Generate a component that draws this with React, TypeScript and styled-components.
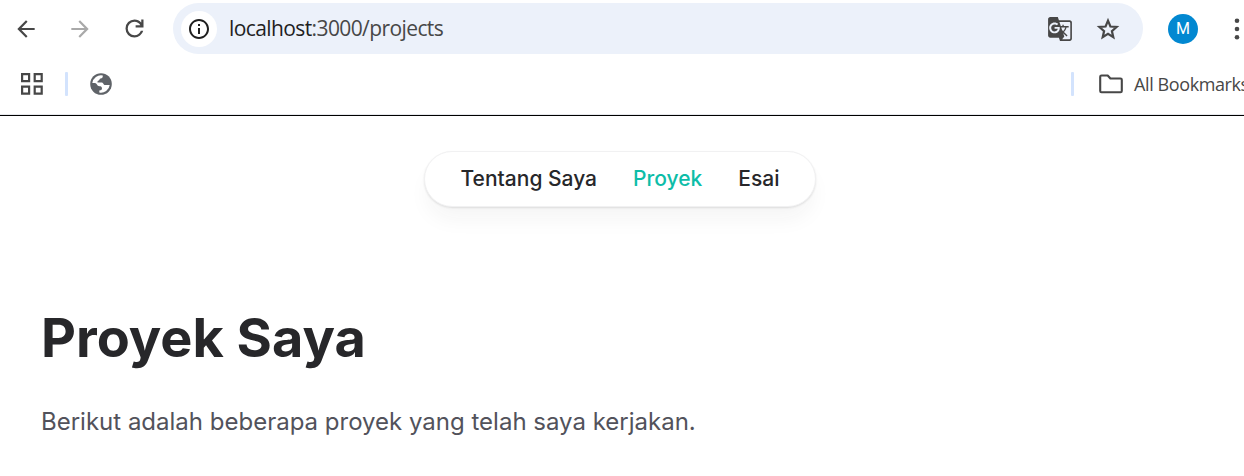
import React from "react";
import styled, { createGlobalStyle } from "styled-components";
import { MdArrowBack, MdArrowForward, MdGTranslate, MdOutlineInfo } from "react-icons/md";

const GlobalStyle = createGlobalStyle`
  * { box-sizing: border-box; }
  html, body { margin: 0; height: 100%; overflow: hidden; background: #fff; }
`;

const Window = styled.div`
  display: flex;
  flex-direction: column;
  width: 1244px;
  height: 476px;
  overflow: hidden;
  background: #fff;
`;

const Toolbar = styled.header`
  display: flex;
  flex: none;
  align-items: center;
  height: 57px;
  padding-left: 13px;
  color: #474747;
`;

const IconButton = styled.button<{ $gap?: number; $muted?: boolean }>`
  display: flex;
  flex: none;
  align-items: center;
  justify-content: center;
  width: 26px;
  height: 26px;
  margin: 0 ${(p) => p.$gap ?? 0}px 0 0;
  padding: 0;
  border: 0;
  background: none;
  color: ${(p) => (p.$muted ? "#a9a9a9" : "#474747")};
  svg { flex: none; }
`;

const AddressBar = styled.div`
  display: flex;
  flex: none;
  align-items: center;
  width: 970px;
  height: 51px;
  padding: 0 22px 0 8px;
  border-radius: 26px;
  background: #ecf1fa;
`;

const SiteInfo = styled.span`
  display: flex;
  align-items: center;
  justify-content: center;
  width: 36px;
  height: 36px;
  border-radius: 50%;
  background: #fff;
  color: #1f1f1f;
`;

const Address = styled.span`
  flex: 1;
  margin-left: 12px;
  padding-bottom: 2px;
  color: #474747;
  font: 400 21px/28px "Open Sans", sans-serif;
  letter-spacing: -0.6px;
  b { color: #1f1f1f; font-weight: 400; }
`;

const Avatar = styled.span`
  display: flex;
  flex: none;
  align-items: center;
  justify-content: center;
  width: 30px;
  height: 30px;
  margin: 0 36px 0 25px;
  border-radius: 50%;
  background: #0288d1;
  color: #fff;
  font: 400 16px/30px Roboto, sans-serif;
`;

const Bookmarks = styled.div`
  display: flex;
  flex: none;
  align-items: center;
  height: 59px;
  padding: 0 0 4px 21px;
  border-bottom: 1px solid #000;
  box-shadow: inset 0 -1px 0 #e6e8ec;
  white-space: nowrap;
`;

const Divider = styled.span<{ $push?: boolean }>`
  flex: none;
  width: 3px;
  height: 24px;
  margin: 0 ${(p) => (p.$push ? 25 : 22)}px 0 ${(p) => (p.$push ? "auto" : "22px")};
  border-radius: 1px;
  background: #d3e3fd;
`;

const AllBookmarks = styled.div`
  display: flex;
  flex: none;
  align-items: center;
  gap: 11px;
  width: 145px;
  color: #474747;
  font: 400 18px/26px "Open Sans", sans-serif;
  letter-spacing: -0.4px;
  svg { flex: none; }
  span { padding-bottom: 1px; }
`;

const Page = styled.main`
  display: flex;
  flex-direction: column;
  flex: 1;
  padding: 35px 41px 0;
  font-family: Inter, sans-serif;
`;

const Nav = styled.nav`
  display: flex;
  align-self: center;
  align-items: center;
  gap: 36px;
  height: 56px;
  margin-right: 4px;
  padding: 0 36px;
  border: 1px solid #f1f1f2;
  border-radius: 28px;
  background: #fff;
  box-shadow: 0 15px 22px -4px rgba(39, 39, 42, 0.05), 0 1px 2px rgba(39, 39, 42, 0.12);
`;

const NavLink = styled.a<{ $active?: boolean }>`
  color: ${(p) => (p.$active ? "#0dbda8" : "#27272a")};
  font-size: 21px;
  font-weight: 500;
  line-height: 30px;
`;

const Title = styled.h1`
  margin: 95px 0 0;
  color: #27272a;
  font-size: 54px;
  font-weight: 700;
  line-height: 72px;
`;

const Intro = styled.p`
  margin: 27px 0 0;
  color: #52525b;
  font-size: 24px;
  line-height: 42px;
`;

const ReloadIcon = () => (
  <svg width="27" height="27" viewBox="0 0 24 24" fill="currentColor">
    <path d="M12 20q-3.350 0-5.675-2.325T4 12t2.325-5.675T12 4q1.725 0 3.300.713T18 6.750V4h2v7h-7V9h4.200q-.8-1.400-2.188-2.200T12 6Q9.500 6 7.750 7.750T6 12t1.750 4.250T12 18q1.925 0 3.475-1.100T17.650 14h2.100q-.7 2.650-2.850 4.325T12 20Z" />
  </svg>
);

const StarIcon = () => (
  <svg width="26" height="26" viewBox="0 0 26 26" fill="none" stroke="currentColor" strokeWidth="2.200">
    <path d="M13 4.700l2.400 5.800 6.200.5-4.700 4.100 1.400 6.100-5.300-3.300-5.300 3.300 1.400-6.100L4.400 11l6.200-.5z" />
  </svg>
);

const GridIcon = () => (
  <svg width="22" height="22" viewBox="0 0 22 22" fill="none" stroke="#474747" strokeWidth="2.2">
    <path d="M1.1 1.1h7v7h-7zM13.7 1.1h7v7h-7zM1.1 13.7h7v7h-7zM13.7 13.7h7v7h-7z" />
  </svg>
);

const GlobeIcon = () => (
  <svg width="22" height="22" viewBox="0 0 22 22">
    <circle cx="11" cy="11" r="10.800" fill="#5f6368" />
    <path
      fill="#fff"
      d="M2.300 10A8.800 8.800 0 0 1 12.800 2.400C13 4.400 12 5.200 10.600 5.400C9.400 5.600 9.600 7 8.800 7.400C7.600 7.800 7.400 8.400 7.500 9.500H11.500C13.600 9.500 13.200 12 15 12H19.700A8.800 8.800 0 0 1 9.300 19.600V17.500C11 17.500 12 16.800 12 15.500C12 13.800 11 13.200 9.500 13.200C7 13.200 6.800 10 5 10Z"
    />
  </svg>
);

const FolderIcon = () => (
  <svg width="24" height="20" viewBox="0 0 24 20" fill="none" stroke="#474747" strokeWidth="2.1" strokeLinejoin="round">
    <path d="M2.500 1.500h6.200l2.700 3h10.100q1.300 0 1.300 1.300v11.100q0 1.300-1.300 1.300h-19q-1.300 0-1.300-1.300V2.800q0-1.300 1.300-1.300z" />
  </svg>
);

const MenuIcon = () => (
  <svg width="6" height="24" viewBox="0 0 6 24" fill="#474747">
    <circle cx="3" cy="3.700" r="2.300" />
    <circle cx="3" cy="12" r="2.300" />
    <circle cx="3" cy="20.300" r="2.300" />
  </svg>
);

export default function App() {
  return (
    <>
      <GlobalStyle />
      <Window>
        <Toolbar>
          <IconButton $gap={28} aria-label="Back"><MdArrowBack size={26} /></IconButton>
          <IconButton $gap={28} $muted aria-label="Forward"><MdArrowForward size={26} /></IconButton>
          <IconButton $gap={26} aria-label="Reload"><ReloadIcon /></IconButton>
          <AddressBar>
            <SiteInfo><MdOutlineInfo size={24} /></SiteInfo>
            <Address><b>localhost</b>:3000/projects</Address>
            <IconButton $gap={22} aria-label="Translate"><MdGTranslate size={26} /></IconButton>
            <IconButton aria-label="Bookmark"><StarIcon /></IconButton>
          </AddressBar>
          <Avatar>M</Avatar>
          <MenuIcon />
        </Toolbar>
        <Bookmarks>
          <GridIcon />
          <Divider />
          <GlobeIcon />
          <Divider $push />
          <AllBookmarks><FolderIcon /><span>All Bookmarks</span></AllBookmarks>
        </Bookmarks>
        <Page>
          <Nav>
            <NavLink>Tentang Saya</NavLink>
            <NavLink $active>Proyek</NavLink>
            <NavLink>Esai</NavLink>
          </Nav>
          <Title>Proyek Saya</Title>
          <Intro>Berikut adalah beberapa proyek yang telah saya kerjakan.</Intro>
        </Page>
      </Window>
    </>
  );
}
